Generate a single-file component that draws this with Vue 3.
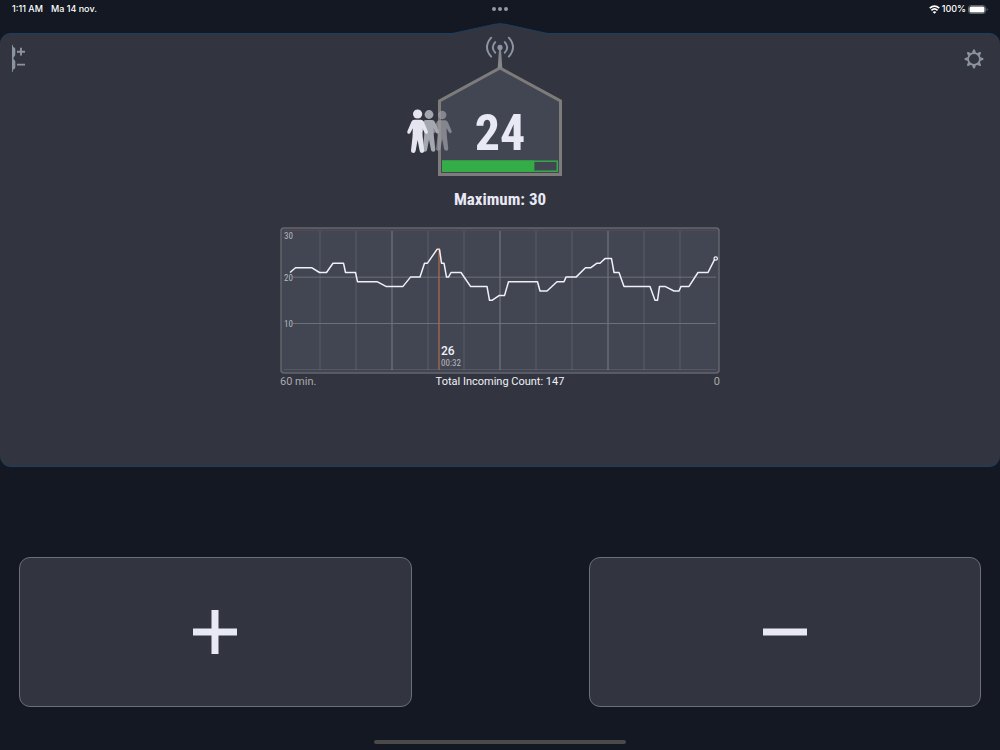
<script setup>
import { ref, computed } from 'vue'

const count = ref(24)
const maximum = 30
const fillWidth = computed(() => Math.round((115 * Math.min(count.value, maximum)) / maximum))

const samples = [
  [10, 21], [15.5, 22], [32, 22], [39.5, 21], [46.5, 21], [53, 23], [63.5, 23], [65.5, 21],
  [75.5, 21], [77.5, 19], [97, 19], [106, 18], [123, 18], [130.5, 20], [140, 20], [144.5, 23],
  [147.5, 23], [157, 26], [159.5, 26], [161.5, 23], [164, 23], [166.5, 20], [168.5, 20], [171, 21],
  [181, 21], [190.5, 18], [207, 18], [209.5, 15], [212, 15], [219, 16], [224.5, 16], [228.5, 19],
  [257.5, 19], [260, 17], [267, 17], [277, 19], [284, 19], [286, 20], [296, 20], [305.5, 22],
  [310.5, 22], [317, 23], [320, 23], [325, 24], [331.5, 24], [334, 21], [339, 21], [344, 18],
  [370, 18], [375, 15], [377.5, 15], [379.5, 18], [385, 18], [394, 17], [399, 17], [401, 18],
  [409, 18], [418, 21], [428, 21], [435, 24]
]
const yOf = (v) => 142.8 - v * 4.635
const line = samples.map(([x, v]) => `${x},${yOf(v).toFixed(1)}`).join(' ')
const columns = [40, 76, 112, 148, 184, 220, 256, 292, 328, 364, 400]
const gearAngles = [0, 45, 90, 135, 180, 225, 270, 315]
const people = [
  { at: 'translate(42.2 81) scale(0.92)', tone: 'far' },
  { at: 'translate(29 80.5) scale(0.96)', tone: 'mid' },
  { at: 'translate(17.6 80)', tone: 'near' }
]
</script>

<template>
  <div class="screen">
    <header class="status">
      <div class="clock"><span>1:11 AM</span><span>Ma 14 nov.</span></div>
      <div class="dots"><i></i><i></i><i></i></div>
      <div class="power">
        <svg width="11" height="9" viewBox="0 0 11 9" fill="none" stroke="#fff" stroke-width="1.6">
          <path d="M.7 3.2Q5.5-1 10.3 3.2M2.4 5.3Q5.5 2.5 8.6 5.3" />
          <path d="M5.5 8.8 3.6 6.9Q5.5 5.4 7.4 6.9Z" fill="#fff" stroke="none" />
        </svg>
        <span>100%</span>
        <svg width="20" height="9" viewBox="0 0 20 9">
          <rect x=".5" y=".5" width="17" height="8" rx="2.5" fill="none" stroke="#5f626a" />
          <rect x="1.5" y="1.5" width="15" height="6" rx="1.5" fill="#fff" />
          <path d="M18.7 3.2v2.6q1-.4 1-1.3t-1-1.3" fill="#74777e" />
        </svg>
      </div>
    </header>

    <main class="panel">
      <svg class="peak" width="104" height="13" viewBox="0 0 104 13">
        <path d="M0 13V11Q3 11 6 10.2L46 1.4Q52 0 58 1.4L98 10.2Q101 11 104 11V13Z" fill="#32353f" />
        <path d="M0 10.8Q3 10.8 6 10.2L46 1.4Q52 0 58 1.4L98 10.2Q101 10.8 104 10.8" fill="none" stroke="#1b3f60" />
      </svg>

      <button class="tool left" aria-label="Button side">
        <svg width="16" height="30" viewBox="0 0 16 30" fill="#8c94a3">
          <path d="M1 .5Q1.9.4 2.2 3 4.3 3.4 4.3 5v5.5Q4.3 12.4 2.6 13.2v2.4Q4.3 16 4.3 17.6v5.6Q4.3 25 2.2 25.4 1.9 28 1 28.3Z" />
          <path d="M6 7.7h8M10 3.8v7.8M6 20.6h8" fill="none" stroke="#8c94a3" stroke-width="1.9" />
        </svg>
      </button>
      <button class="tool right" aria-label="Settings">
        <svg width="20" height="20" viewBox="-10 -10 20 20">
          <circle r="5.9" fill="none" stroke="#8c94a3" stroke-width="1.7" />
          <path v-for="a in gearAngles" :key="a" d="M-2.1-6.2-.7-9.4H.7L2.1-6.2Z" fill="#8c94a3" :transform="`rotate(${a})`" />
        </svg>
      </button>

      <svg class="house" width="200" height="146" viewBox="0 0 200 146">
        <path d="M100 34 160.5 67V140.5H39.5V67Z" fill="#424653" stroke="#7d7c7b" stroke-width="3" />
        <path d="M99 15h2l1.3 19h-4.6Z" fill="#85878b" />
        <circle cx="100" cy="13.4" r="2.6" fill="#8c95a5" />
        <g fill="none" stroke="#8c95a5" stroke-width="1.9" stroke-linecap="round">
          <path d="M95.2 8.1Q90.4 13.4 95.2 18.7M104.8 8.1Q109.6 13.4 104.8 18.7" />
          <path d="M91.2 3.7Q82.8 13.4 91.2 22.6M108.8 3.7Q117.2 13.4 108.8 22.6" />
        </g>
        <g v-for="p in people" :key="p.tone" :class="p.tone" :transform="p.at">
          <circle r="4.6" />
          <path d="M-3.3 5.7H3.3Q5.2 5.8 6.2 7.8L10.3 17.4Q10.7 19 9.3 19.7 7.8 20.2 7 18.6L4.8 14.2 5 22 6.6 36.8Q6.6 38.8 4.5 38.9 2.5 38.9 2.1 37L0 26-2 37Q-2.4 39-4.5 38.9-6.7 38.8-6.6 36.8L-5 22-4.8 14.2-7 18.6Q-7.8 20.2-9.3 19.7-10.7 19-10.3 17.4L-6.2 7.8Q-5.2 5.8-3.3 5.7Z" />
        </g>
        <text class="count" x="100" y="116" text-anchor="middle">{{ count }}</text>
        <rect x="42.8" y="127.2" width="114.5" height="10" fill="#424653" stroke="#34ad49" stroke-width="1.5" />
        <rect x="42" y="126.5" :width="fillWidth" height="11.5" fill="#34ad49" />
        <path d="M134.5 128v8.5" stroke="#2b7b3c" />
      </svg>

      <h1 class="maximum">Maximum: {{ maximum }}</h1>

      <section class="history">
        <svg width="440" height="147" viewBox="0 0 440 147">
          <rect x="1" y="1" width="438" height="145" rx="3" fill="#424653" stroke="#64666d" stroke-width="1.5" />
          <path d="M4 142.5H436" stroke="#555862" />
          <path v-for="x in columns" :key="x" :d="`M${x} 4V143`" stroke="#8c8e95" stroke-width="1.3" :opacity="(x - 4) % 108 === 0 ? 0.6 : 0.24" />
          <path d="M13 50.2H436M13 96.5H436" stroke="#6e7078" />
          <path d="M4 3.5H436" stroke="#5c4551" />
          <g class="scale">
            <text x="4" y="12">30</text>
            <text x="4" y="54">20</text>
            <text x="4" y="100">10</text>
          </g>
          <path d="M159 22V143" stroke="#a9694b" stroke-width="1.3" />
          <polyline :points="line" fill="none" stroke="#f0f0f7" stroke-width="1.5" stroke-linejoin="round" />
          <path d="M157.5 21.8H160" stroke="#e47c45" />
          <circle cx="435.7" cy="31.5" r="1.7" fill="#424653" stroke="#f0f0f7" stroke-width="1.2" />
          <text class="peak-count" x="161" y="128">26</text>
          <text class="peak-time" x="161" y="139">00:32</text>
        </svg>
        <div class="caption">
          <span>60 min.</span>
          <strong>Total Incoming Count: 147</strong>
          <span>0</span>
        </div>
      </section>
    </main>

    <div class="controls">
      <button class="step" aria-label="Add one" @click="count++">
        <svg width="46" height="46" viewBox="0 0 46 46"><path d="M1 23H45M23 1V45" stroke="#e9e8f5" stroke-width="7" /></svg>
      </button>
      <button class="step" aria-label="Remove one" @click="count--">
        <svg width="46" height="46" viewBox="0 0 46 46"><path d="M1 23H45" stroke="#e9e8f5" stroke-width="7" /></svg>
      </button>
    </div>
    <div class="home"></div>
  </div>
</template>

<style>
body { background: #141822; }
</style>

<style scoped>
.screen {
  min-height: 100vh;
  box-sizing: border-box;
  display: flex;
  flex-direction: column;
  background: #141822;
  color: #e9e8f5;
  font-family: Roboto, "Liberation Sans", sans-serif;
}
.status {
  display: grid;
  grid-template-columns: 1fr auto 1fr;
  align-items: center;
  height: 18px;
  padding: 0 12px;
  margin-bottom: 15px;
  font: 500 9px/18px Inter, sans-serif;
  color: #fff;
}
.clock { display: flex; gap: 8px; }
.dots { display: flex; gap: 2px; }
.dots i { width: 4px; height: 4px; border-radius: 50%; background: #9699a0; }
.power { display: flex; align-items: center; justify-content: flex-end; gap: 2px; }
.panel {
  position: relative;
  flex: 1;
  display: flex;
  flex-direction: column;
  align-items: center;
  background: #32353f;
  border: solid #1b3f60;
  border-width: 1px 0;
  border-radius: 11px;
}
.peak { position: absolute; top: -11px; left: 50%; margin-left: -52px; }
button { padding: 0; font: inherit; cursor: pointer; }
svg { display: block; flex: none; }
.tool { position: absolute; border: 0; background: none; }
.tool.left { top: 10px; left: 11px; }
.tool.right { top: 15px; right: 16px; }
.house { position: relative; }
.near { fill: #e5e4ef; }
.mid { fill: #a5a7b0; }
.far { fill: #9a9ba1; opacity: .75; }
.count { font: 700 50px "Roboto Condensed", "Liberation Sans Narrow", sans-serif; fill: #e9e8f5; }
.maximum { margin: 6px 0 15px; font: 700 17px/26px "Roboto Condensed", "Liberation Sans Narrow", sans-serif; }
.history { width: 440px; }
.scale, .peak-time { font: 400 9px "Roboto Condensed", "Liberation Sans Narrow", sans-serif; fill: #b8b8ba; }
.peak-count { font: 500 12px Roboto, sans-serif; fill: #f0f0f7; }
.caption {
  display: grid;
  grid-template-columns: 1fr auto 1fr;
  font-size: 11px;
  line-height: 16px;
  color: #a9aaad;
}
.caption strong { font-weight: 400; color: #f0f0f7; }
.caption span:last-child { text-align: right; }
.controls {
  display: grid;
  grid-template-columns: 1fr 1fr;
  gap: 177px;
  padding: 0 19px;
  margin: 90px 0 33px;
}
.step {
  display: flex;
  align-items: center;
  justify-content: center;
  height: 150px;
  background: #32353f;
  border: 1px solid #6c6f77;
  border-radius: 11px;
}
.home { width: 252px; height: 4px; margin: 0 auto 6px; border-radius: 2px; background: #4a4a4b; }
</style>
